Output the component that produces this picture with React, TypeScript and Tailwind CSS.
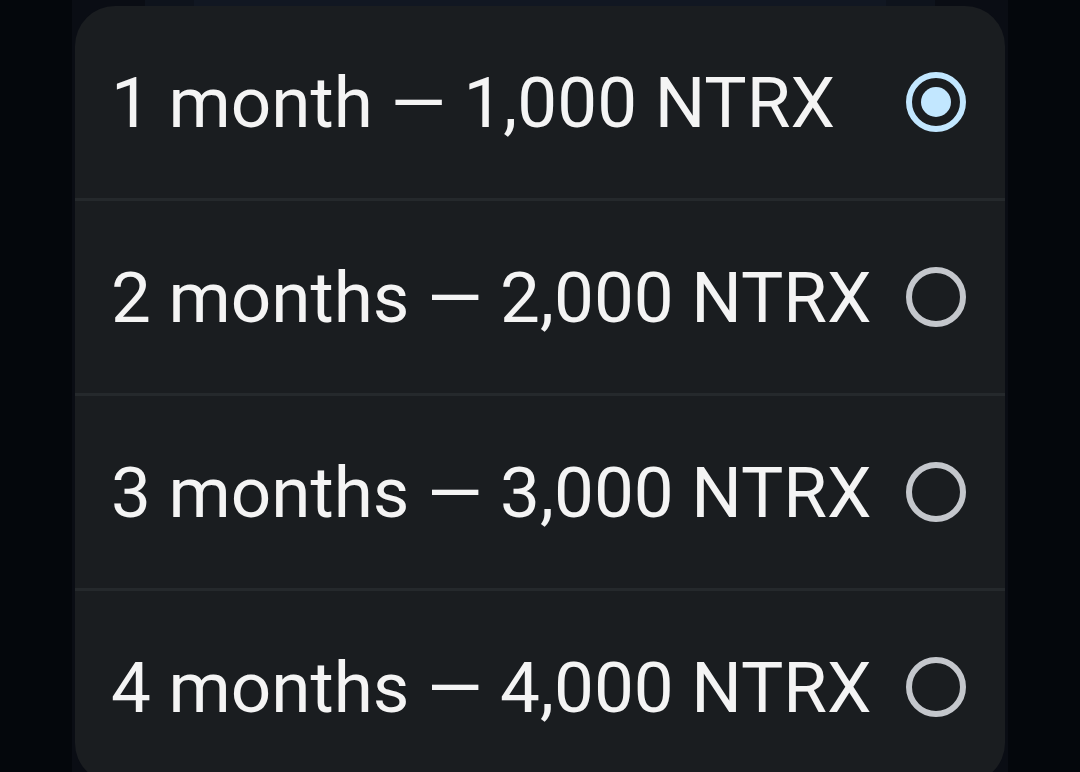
import React from "react";

const options = [
  { label: "1 month — 1,000 NTRX", selected: true },
  { label: "2 months — 2,000 NTRX", selected: false },
  { label: "3 months — 3,000 NTRX", selected: false },
  { label: "4 months — 4,000 NTRX", selected: false },
];

function Radio({ selected }: { selected: boolean }) {
  if (selected) {
    return (
      <svg width="60" height="60" viewBox="0 0 60 60" className="shrink-0">
        <circle cx="30" cy="30" r="27" fill="none" stroke="#c2e7ff" strokeWidth="6" />
        <circle cx="30" cy="30" r="15" fill="#c2e7ff" />
      </svg>
    );
  }
  return (
    <svg width="60" height="60" viewBox="0 0 60 60" className="shrink-0">
      <circle cx="30" cy="30" r="27" fill="none" stroke="#c4c7cc" strokeWidth="6" />
    </svg>
  );
}

export default function App() {
  return (
    <div
      className="w-full h-[772px] overflow-hidden bg-[#04070c] flex justify-center"
      style={{ fontFamily: "Roboto, 'Noto Sans', sans-serif" }}
    >
      <div className="w-[936px] h-full bg-[#0a0d14] flex flex-col">
        <div className="h-[6px] shrink-0 flex justify-center">
          <div className="w-[790px] h-full bg-[#0e131c] flex justify-center">
            <div className="w-[692px] h-full bg-[#111722]" />
          </div>
        </div>
        <div className="mx-[3px] rounded-[40px] bg-[#1a1d20] flex flex-col overflow-hidden shrink-0">
          {options.map((o, i) => (
            <React.Fragment key={o.label}>
              {i > 0 && <div className="h-[3px] bg-[#25292c] shrink-0" />}
              <div className="h-[192px] flex items-center justify-between pl-[36px] pr-[39px]">
                <span className="text-[71px] leading-none text-[#f4f4f4] whitespace-nowrap">
                  {o.label}
                </span>
                <Radio selected={o.selected} />
              </div>
            </React.Fragment>
          ))}
        </div>
      </div>
    </div>
  );
}
